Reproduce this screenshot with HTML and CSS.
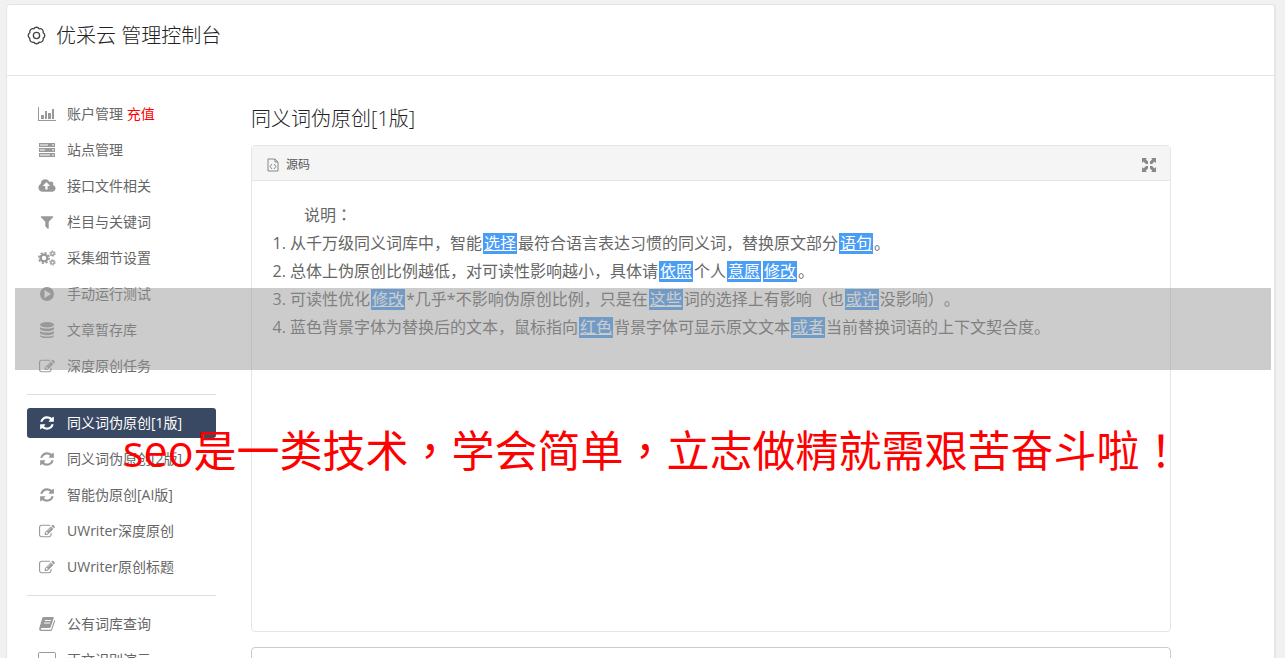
FILE: index.html
```html
<!DOCTYPE html>
<html lang="zh-CN">
  <head>
    <meta charset="UTF-8" />
    <meta name="viewport" content="width=device-width, initial-scale=1.0" />
    <title>优采云 管理控制台</title>
    <link rel="stylesheet" href="styles.css">
  </head>
  <body>
    <svg class="sprite" aria-hidden="true">
      <symbol id="refresh" viewBox="0 0 1792 1792">
        <path d="M1639 1056q0 5-1 7-64 268-268 434.500t-478 166.500q-146 0-282.500-55t-243.500-157l-129 129q-19 19-45 19t-45-19-19-45v-448q0-26 19-45t45-19h448q26 0 45 19t19 45-19 45l-137 137q71 66 161 102t187 36q134 0 250-65t186-179q11-17 53-117 8-23 30-23h192q13 0 22.500 9.500t9.500 22.500zm25-800v448q0 26-19 45t-45 19h-448q-26 0-45-19t-19-45 19-45l138-138q-148-137-349-137-134 0-250 65t-186 179q-11 17-53 117-8 23-30 23h-199q-13 0-22.500-9.500t-9.500-22.500v-7q65-268 270-434.500t480-166.500q146 0 284 55.500t245 156.500l130-129q19-19 45-19t45 19 19 45z"/>
      </symbol>
      <symbol id="edit" viewBox="0 -64 1792 1792">
        <path d="M888 1184l116-116-152-152-116 116v56h96v96h56zm440-720q-16-16-33 1L945 815q-17 17-1 33t33-1l350-350q17-17 1-33zm80 594v190q0 119-84.500 203.500T1120 1536H288q-119 0-203.500-84.500T0 1248V416q0-119 84.500-203.500T288 128h832q63 0 117 25 15 7 18 23 3 17-9 29l-49 49q-14 14-32 8-23-6-45-6H288q-66 0-113 47t-47 113v832q0 66 47 113t113 47h832q66 0 113-47t47-113v-126q0-13 9-22l64-64q15-15 35-7t20 29zm-96-738l288 288-672 672H640V992zm444 132l-92 92-288-288 92-92q28-28 68-28t68 28l152 152q28 28 28 68t-28 68z"/>
      </symbol>
    </svg>

    <div class="card">
      <header class="header">
        <svg class="gear" viewBox="0 0 20 20"><path d="M17 7.100a3.300 3.300 0 0 1 0 5.800a3.300 3.300 0 0 1-4.100 4.100a3.300 3.300 0 0 1-5.800 0A3.300 3.300 0 0 1 3 12.900a3.300 3.300 0 0 1 0-5.800A3.300 3.300 0 0 1 7.100 3a3.300 3.300 0 0 1 5.800 0A3.300 3.300 0 0 1 17 7.100z"/><circle cx="10" cy="10" r="3.300"/></svg>
        <h1>优采云 管理控制台</h1>
      </header>

      <div class="content">
        <nav class="nav">
          <a href="#"><svg viewBox="0 0 18 16"><path d="M0 1h1v13h17v1H0zM3 9h3v4H3zM7 5h2v8H7zM10 7h3v6h-3zM14 3h2v10h-2z"/></svg><span>账户管理 <em>充值</em></span></a>
          <a href="#"><svg viewBox="0 0 18 16"><path d="M1 1h16v4H1zM1 6h16v4H1zM1 11h16v4H1z"/><path class="slot" d="M2 2h8v2H2zM2 7h5v2H2zM2 12h10v2H2zM14 2h2v2h-2zM14 7h2v2h-2zM14 12h2v2h-2z"/></svg><span>站点管理</span></a>
          <a href="#"><svg viewBox="0 0 1920 1792"><path d="M1280 864q0-14-9-23l-352-352q-9-9-23-9t-23 9l-351 351q-10 12-10 24 0 14 9 23t23 9h224v352q0 13 9.500 22.500t22.500 9.500h192q13 0 22.500-9.500t9.500-22.500v-352h224q13 0 22.500-9.500t9.500-22.500zm640 288q0 159-112.500 271.500t-271.500 112.500h-1088q-185 0-316.500-131.500t-131.500-316.500q0-130 70-240t188-165q-2-30-2-43 0-212 150-362t362-150q156 0 285.500 87t188.500 231q71-62 166-62 106 0 181 75t75 181q0 76-41 138 130 31 213.500 135.500t83.500 238.500z"/></svg><span>接口文件相关</span></a>
          <a href="#"><svg viewBox="0 0 1792 1792"><path d="M1595 295q17 41-14 70l-493 493v742q0 42-39 59-13 5-25 5-27 0-45-19l-256-256q-19-19-19-45V858L211 365q-31-29-14-70 17-39 59-39h1280q42 0 59 39z"/></svg><span>栏目与关键词</span></a>
          <a href="#"><svg viewBox="0 0 18 16"><g class="cog"><circle cx="6" cy="8" r="3.400" stroke-width="2.400"/><circle cx="6" cy="8" r="5.200" stroke-width="1.600" stroke-dasharray="2.040 2.040"/><circle cx="14.500" cy="3.600" r="1.700" stroke-width="1.400"/><circle cx="14.500" cy="3.600" r="2.700" stroke-width="1" stroke-dasharray="1.410 1.410"/><circle cx="14.500" cy="12.400" r="1.700" stroke-width="1.400"/><circle cx="14.500" cy="12.400" r="2.700" stroke-width="1" stroke-dasharray="1.410 1.410"/></g></svg><span>采集细节设置</span></a>
          <a href="#"><svg viewBox="0 0 18 16"><path fill-rule="evenodd" d="M9 1a7 7 0 1 1 0 14A7 7 0 0 1 9 1zM6.500 4v8l6.500-4z"/></svg><span>手动运行测试</span></a>
          <a href="#"><svg viewBox="0 0 18 16"><ellipse cx="9" cy="2.800" rx="7" ry="2.800"/><path d="M2 5c2 2 12 2 14 0v2c-1 3-13 3-14 0zM2 9c2 2 12 2 14 0v2c-1 3-13 3-14 0zM2 13c2 2 12 2 14 0v1c-1 3-13 3-14 0z"/></svg><span>文章暂存库</span></a>
          <a href="#"><svg><use href="#edit"/></svg><span>深度原创任务</span></a>
          <hr>
          <a href="#" class="active"><svg><use href="#refresh"/></svg><span>同义词伪原创[1版]</span></a>
          <a href="#"><svg><use href="#refresh"/></svg><span>同义词伪原创[2版]</span></a>
          <a href="#"><svg><use href="#refresh"/></svg><span>智能伪原创[AI版]</span></a>
          <a href="#"><svg><use href="#edit"/></svg><span>UWriter深度原创</span></a>
          <a href="#"><svg><use href="#edit"/></svg><span>UWriter原创标题</span></a>
          <hr>
          <a href="#"><svg viewBox="0 0 18 16"><path fill-rule="evenodd" d="M5.500 1H15q1 0 .7 1l-3 9q-.4 1-1.500 1H3q-.8 1.800.8 1.800H13L16.300 4q1 .4.700 1.500l-3 8.500q-.3 1-1.500 1H3.500Q.5 15 1.300 12l3-10q.3-1 1.200-1zM7 4l-.3 1h6l.3-1zM6.200 6.500l-.3 1h6l.3-1z"/></svg><span>公有词库查询</span></a>
          <a href="#"><svg viewBox="0 0 18 16"><path fill-rule="evenodd" d="M2 0h14q2 0 2 2v9q0 2-2 2h-5v2h2v1H5v-1h2v-2H2q-2 0-2-2V2q0-2 2-2zM1 1v10h16V1z"/></svg><span>正文识别演示</span></a>
        </nav>

        <main class="main">
          <h2>同义词伪原创[1版]</h2>
          <div class="editor">
            <div class="toolbar">
              <button type="button"><svg width="12" height="14" viewBox="0 0 12 14"><path d="M1 1h7l3 3v9H1zM8 1v3h3"/><path d="M5 6L3 8.500 5 11M7 6l2 2.500L7 11"/></svg><span>源码</span></button>
              <button type="button" aria-label="全屏"><svg class="expand" width="14" height="14" viewBox="0 0 14 14"><path d="M0 0h5L3.700 1.300 6 3.600V6H4L1.500 3.500 0 5zM14 0v5l-1.500-1.500L10 6H8V3.600l2.300-2.300L9 0zM0 14V9l1.500 1.500L4 8h2v2.400l-2.300 2.300L5 14zM14 14H9l1.300-1.300L8 10.400V8h2l2.500 2.500L14 9z"/></svg></button>
            </div>
            <div class="text">
              <p lang="zh-TW">说明：</p>
              <ol>
                <li>从千万级同义词库中，智能<a href="#">选择</a>最符合语言表达习惯的同义词，替换原文部分<a href="#">语句</a>。</li>
                <li>总体上伪原创比例越低，对可读性影响越小，具体请<a href="#">依照</a>个人<a href="#">意愿</a><a href="#">修改</a>。</li>
                <li>可读性优化<a href="#">修改</a>*几乎*不影响伪原创比例，只是在<a href="#">这些</a>词的选择上有影响（也<a href="#">或许</a>没影响）。</li>
                <li>蓝色背景字体为替换后的文本，鼠标指向<a href="#">红色</a>背景字体可显示原文文本<a href="#">或者</a>当前替换词语的上下文契合度。</li>
              </ol>
            </div>
          </div>
          <textarea class="source" aria-label="原文"></textarea>
        </main>
      </div>
    </div>

    <div class="band"></div>
    <div class="slogan" lang="zh-TW">seo是一类技术，学会简单，立志做精就需艰苦奋斗啦！</div>
  </body>
</html>
```
FILE: styles.css
```css
* {
  box-sizing: border-box;
}

body {
  margin: 0;
  min-height: 100vh;
  padding: 4px 9px 0 6px;
  position: relative;
  background-color: #f1f1f1;
  color: #666;
  font-family: "Open Sans", "Noto Sans CJK SC", sans-serif;
  font-size: 14px;
  text-spacing-trim: space-all;
}

.sprite {
  display: none;
}

.card {
  background-color: #fff;
  border: 1px solid #e5e5e5;
  border-right-width: 2px;
  border-radius: 4px;
}

.header {
  display: flex;
  align-items: center;
  gap: 10px;
  height: 71px;
  padding: 0 20px 10px;
  border-bottom: 1px solid #e5e5e5;
}

.gear {
  width: 19px;
  height: 19px;
  fill: none;
  stroke: #444;
  stroke-width: 1.4;
  stroke-linejoin: round;
}

h1,
h2 {
  margin: 0;
  padding-top: 2px;
  color: #222;
  font-size: 20px;
  font-weight: 300;
  line-height: 28px;
}

.content {
  display: flex;
  gap: 35px;
  padding: 20px 103px 20px 20px;
}

/* left menu */
.nav {
  flex: 0 0 189px;
}

.nav a {
  display: flex;
  align-items: center;
  gap: 11px;
  height: 30px;
  margin: 3px 0 6px;
  padding: 0 11px;
  border-radius: 3px;
  color: #666;
  text-decoration: none;
  white-space: nowrap;
}

.nav a + a {
  margin-top: 0;
}

.nav span,
.toolbar span {
  padding-bottom: 2px;
}

.nav svg {
  width: 18px;
  height: 16px;
  fill: #999;
}

.nav .slot {
  fill: #ccc;
}

.nav .cog {
  fill: none;
  stroke: #999;
}

.nav em {
  color: #f00;
  font-style: normal;
}

.nav .active {
  background-color: #394963;
  color: #fff;
}

.nav .active svg {
  fill: #fff;
}

.nav hr {
  height: 1px;
  margin: 13px 0;
  border: none;
  background-color: #ddd;
}

.nav a:has(+ hr) {
  margin-bottom: 0;
}

.nav hr + a {
  margin-top: 0;
}

.main {
  flex: 1;
  min-width: 0;
  padding-top: 7px;
}

.editor {
  margin: 12px 0 15px;
  border: 1px solid #e5e5e5;
  border-radius: 4px;
}

.toolbar {
  display: flex;
  justify-content: space-between;
  align-items: center;
  height: 35px;
  padding: 3px 14px 0 15px;
  background-color: #f5f5f5;
  border-bottom: 1px solid #e5e5e5;
}

.toolbar button {
  display: flex;
  align-items: center;
  gap: 7px;
  padding: 0;
  border: none;
  background: none;
  color: #555;
  font-family: inherit;
  font-size: 12px;
}

.toolbar svg {
  fill: none;
  stroke: #888;
}

.toolbar .expand {
  fill: #888;
  stroke: none;
}

.text {
  min-height: 450px;
  padding: 20px;
  font-size: 16px;
  line-height: 28px;
}

.text p {
  margin: 0;
  text-indent: 2em;
}

.text ol {
  margin: 0;
  padding-left: 18px;
}

.text a {
  display: inline-block;
  margin: 0 1px;
  padding: 0 1px;
  line-height: 21px;
  background-color: #499df5;
  color: #fff;
}

.source {
  display: block;
  width: 100%;
  height: 120px;
  border: 1px solid #ccc;
  border-radius: 4px;
  resize: none;
}

.band {
  position: absolute;
  top: 288px;
  left: 15px;
  right: 14px;
  height: 82px;
  background-color: rgba(153, 153, 153, 0.5);
}

.slogan {
  position: absolute;
  top: 421px;
  left: 123px;
  color: #f00;
  font-family: "Open Sans", "Noto Sans CJK TC", sans-serif;
  font-size: 43px;
  line-height: 60px;
  white-space: nowrap;
}
```
